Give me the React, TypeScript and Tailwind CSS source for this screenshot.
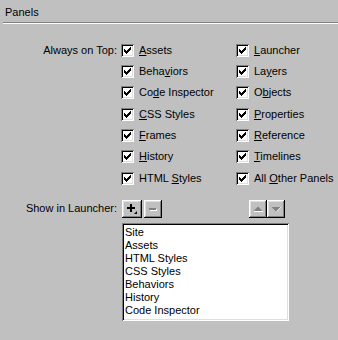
import React from "react";

const sunken =
  "shadow-[inset_1px_1px_0_#808080,inset_-1px_-1px_0_#ffffff,inset_2px_2px_0_#000000,inset_-2px_-2px_0_#dfdfdf]";
const raised =
  "shadow-[inset_-1px_-1px_0_#000000,inset_1px_1px_0_#ffffff,inset_-2px_-2px_0_#808080,inset_2px_2px_0_#dfdfdf]";

function Check() {
  return (
    <span className={`relative block w-[13px] h-[13px] bg-white shrink-0 ${sunken}`}>
      <svg width="13" height="13" viewBox="0 0 13 13" className="absolute left-0 top-0">
        <path
          d="M3 5h1v1h1v1h1V6h1V5h1V4h1V3h1v3h-1v1h-1v1h-1v1h-1v1H5V9H4V8H3z"
          fill="#000"
        />
      </svg>
    </span>
  );
}

function Label({ text, u }: { text: string; u: number }) {
  return (
    <span className="whitespace-nowrap">
      {text.slice(0, u)}
      <span className="underline underline-offset-[1px]">{text[u]}</span>
      {text.slice(u + 1)}
    </span>
  );
}

const col1: [string, number][] = [
  ["Assets", 0],
  ["Behaviors", 4],
  ["Code Inspector", 2],
  ["CSS Styles", 0],
  ["Frames", 0],
  ["History", 0],
  ["HTML Styles", 5],
];
const col2: [string, number][] = [
  ["Launcher", 0],
  ["Layers", 2],
  ["Objects", 1],
  ["Properties", 0],
  ["Reference", 0],
  ["Timelines", 0],
  ["All Other Panels", 4],
];

function Item({ t, u }: { t: string; u: number }) {
  return (
    <div className="flex items-center h-[21.33px] gap-[5px]">
      <Check />
      <Label text={t} u={u} />
    </div>
  );
}

export default function App() {
  return (
    <div className="w-[338px] h-[340px] bg-[#c0c0c0] text-black text-[11px] leading-[13px] font-['Liberation_Sans',Arial,sans-serif] overflow-hidden">
      <div className="pl-[5px] pt-[6px] h-[22px]">Panels</div>
      <div className="ml-[3px] border-t border-t-[#808080] border-b border-b-white" />
      <div className="flex mt-[15.5px]">
        <div className="w-[117px] text-right h-[21.33px] flex items-center justify-end">
          Always on Top:
        </div>
        <div className="ml-[4px] w-[115px] flex flex-col">
          {col1.map(([t, u]) => (
            <Item key={t} t={t} u={u} />
          ))}
        </div>
        <div className="flex flex-col">
          {col2.map(([t, u]) => (
            <Item key={t} t={t} u={u} />
          ))}
        </div>
      </div>
      <div className="flex items-center mt-[11px] h-[18px]">
        <div className="w-[117px] text-right">Show in Launcher:</div>
        <div className={`ml-[5px] w-[20px] h-[18px] bg-[#c0c0c0] ${raised}`}>
          <svg width="20" height="18" viewBox="0 0 20 18">
            <rect x="5" y="7" width="8" height="2" fill="#000" />
            <rect x="8" y="4" width="2" height="8" fill="#000" />
            <polygon points="12,14 15,11 15,14" fill="#000" />
          </svg>
        </div>
        <div className={`ml-[2px] w-[18px] h-[18px] bg-[#c0c0c0] ${raised}`}>
          <svg width="18" height="18" viewBox="0 0 18 18">
            <rect x="6" y="9" width="7" height="2" fill="#fff" />
            <rect x="5" y="8" width="7" height="2" fill="#808080" />
          </svg>
        </div>
        <div className="flex-1" />
        <div className={`w-[18px] h-[18px] bg-[#c0c0c0] ${raised}`}>
          <svg width="18" height="18" viewBox="0 0 18 18">
            <rect x="5" y="11" width="9" height="1" fill="#fff" />
            <polygon points="4.5,11 9,6.5 13.5,11" fill="#808080" />
          </svg>
        </div>
        <div className={`w-[18px] h-[18px] mr-[53px] bg-[#c0c0c0] ${raised}`}>
          <svg width="18" height="18" viewBox="0 0 18 18">
            <polygon points="13.5,7 14.5,7 10,11.5 9,11.5" fill="#fff" />
            <polygon points="4.5,7 13.5,7 9,11.5" fill="#808080" />
          </svg>
        </div>
      </div>
      <div className={`ml-[122px] mt-[5px] w-[167px] h-[98px] bg-white pl-[3px] pt-[3px] ${sunken}`}>
        {["Site", "Assets", "HTML Styles", "CSS Styles", "Behaviors", "History", "Code Inspector"].map(
          (s) => (
            <div key={s} className="h-[13px] leading-[13px] whitespace-nowrap">
              {s}
            </div>
          )
        )}
      </div>
    </div>
  );
}
